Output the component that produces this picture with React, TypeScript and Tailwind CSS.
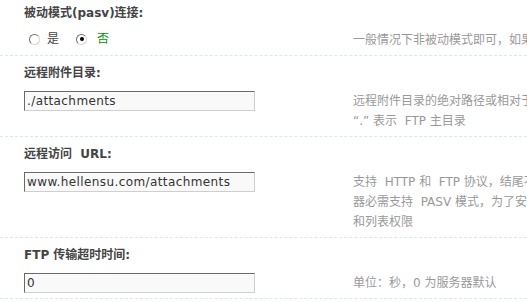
const cjk = "font-['Tahoma','DejaVu_Sans','Noto_Sans_CJK_SC',sans-serif]";

const sections = [
  {
    label: "被动模式(pasv)连接:",
    kind: "radio",
    tips: ["一般情况下非被动模式即可，如果存在上传失败问题，可尝试打开此设置"],
  },
  {
    label: "远程附件目录:",
    kind: "input",
    value: "./attachments",
    tips: [
      "远程附件目录的绝对路径或相对于 FTP 主目录的相对路径，结尾不要加斜杠“/”，",
      "“.” 表示  FTP 主目录",
    ],
  },
  {
    label: "远程访问  URL:",
    kind: "input",
    value: "www.hellensu.com/attachments",
    tips: [
      "支持  HTTP 和  FTP 协议，结尾不要加斜杠“/”；如果使用 FTP 协议，FTP 服务",
      "器必需支持  PASV 模式，为了安全起见，使用 FTP 连接的帐号不要设置可写权限",
      "和列表权限",
    ],
  },
  {
    label: "FTP 传输超时时间:",
    kind: "input",
    value: "0",
    tips: ["单位：秒，0 为服务器默认"],
  },
];

function Radio({ checked }: { checked?: boolean }) {
  return (
    <span className="flex h-[11px] w-[11px] items-center justify-center rounded-full border border-t-[#707070] border-l-[#707070] border-r-[#d4d4d4] border-b-[#d4d4d4] bg-white">
      {checked && <span className="h-[4px] w-[4px] rounded-full bg-black" />}
    </span>
  );
}

export default function App() {
  return (
    <main className={`h-[302px] w-[527px] overflow-hidden bg-white text-[12px] ${cjk}`}>
      {sections.map((s, i) => (
        <section key={s.label} className="border-b border-dashed border-[#d6e7f5] pl-6">
          <div className={`${i === 0 ? "pt-[3px]" : "pt-[7px]"} font-bold leading-5 text-[#444]`}>
            <span className="whitespace-pre">{s.label}</span>
          </div>
          <div className={`grid grid-cols-[329px_1fr] ${i === 0 ? "pt-[7px]" : "pt-2"} pb-[5px]`}>
            {s.kind === "radio" ? (
              <div className="flex h-5 items-start pt-[3px] pl-[5px] text-[#444]">
                <div className="flex items-center">
                  <Radio />
                  <span className="ml-[7px] leading-[12px]">是</span>
                </div>
                <div className="ml-[17px] flex items-center">
                  <Radio checked />
                  <span className="ml-[10px] leading-[12px] text-[#009900]">否</span>
                </div>
              </div>
            ) : (
              <div>
                <div className="flex h-[20px] w-[231px] items-center border border-t-[#6a6a6a] border-l-[#6a6a6a] border-r-[#cfcfcf] border-b-[#cfcfcf] bg-[#f9f9f9] px-[2px] font-['DejaVu_Sans',sans-serif] text-[12px] tracking-[0.4px] text-[#333]">
                  {s.value}
                </div>
              </div>
            )}
            <div className="overflow-hidden whitespace-pre leading-5 text-[#999]">
              {s.tips.map((t) => (
                <div key={t}>{t}</div>
              ))}
            </div>
          </div>
        </section>
      ))}
    </main>
  );
}
